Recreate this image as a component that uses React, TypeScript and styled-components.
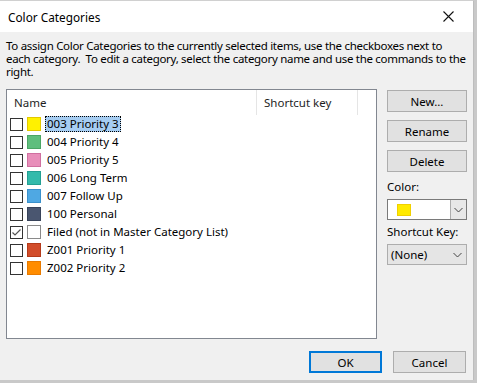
import React from 'react';
import styled, { createGlobalStyle } from "styled-components";

const categories = [
    { name: "003 Priority 3", color: "#fff100", border: "#e3c800", selected: true },
    { name: "004 Priority 4", color: "#5fbe7d", border: "#4aa564" },
    { name: "005 Priority 5", color: "#e88fba", border: "#d070a0" },
    { name: "006 Long Term", color: "#33baab", border: "#23a093" },
    { name: "007 Follow Up", color: "#4fa8e3", border: "#3a91cc" },
    { name: "100 Personal", color: "#4a5670", border: "#38435a" },
    { name: "Filed (not in Master Category List)", color: "#ffffff", border: "#8a8a8a", checked: true },
    { name: "Z001 Priority 1", color: "#d24d2a", border: "#b43a1a" },
    { name: "Z002 Priority 2", color: "#ff8c00", border: "#e87a00" },
];

const descriptionLines = [
    "To assign Color Categories to the currently selected items, use the checkboxes next to",
    "each category.\u00a0 To edit a category, select the category name and use the commands to the",
    "right.",
];

const Chevron = () => (
    <svg width="9" height="6" viewBox="0 0 9 6">
        <polyline points="0.5,1 4.5,5 8.5,1" fill="none" stroke="#444" strokeWidth="1" />
    </svg>
);

const App = () => {
    return (
        <>
            <GlobalStyle />
            <Screen>
                <Dialog>
                    <TitleBar>
                        <Title>Color Categories</Title>
                        <CloseButton>
                            <svg width="11" height="11" viewBox="0 0 11 11">
                                <path d="M0.5 0.5 L10.5 10.5 M10.5 0.5 L0.5 10.5" stroke="#111" strokeWidth="1.1" />
                            </svg>
                        </CloseButton>
                    </TitleBar>
                    <Body>
                        <Description>
                            {descriptionLines.map((line) => (
                                <DescLine key={line}>{line}</DescLine>
                            ))}
                        </Description>
                        <Main>
                            <ListBox>
                                <Header>
                                    <HeaderCell $width={250}>Name</HeaderCell>
                                    <HeaderCell $width={101}>Shortcut key</HeaderCell>
                                </Header>
                                {categories.map((c) => (
                                    <Row key={c.name}>
                                        <CheckBox>
                                            {c.checked && (
                                                <svg width="11" height="11" viewBox="0 0 11 11">
                                                    <polyline points="1.5,5.5 4,8 9.5,2.5" fill="none" stroke="#555" strokeWidth="1.2" />
                                                </svg>
                                            )}
                                        </CheckBox>
                                        <Swatch $color={c.color} $border={c.border} />
                                        <Label $selected={!!c.selected}>{c.name}</Label>
                                    </Row>
                                ))}
                            </ListBox>
                            <Side>
                                <Button>New...</Button>
                                <Button>Rename</Button>
                                <Button>Delete</Button>
                                <FieldLabel>Color:</FieldLabel>
                                <ColorCombo>
                                    <ColorValue>
                                        <ComboSwatch />
                                    </ColorValue>
                                    <DropButton>
                                        <Chevron />
                                    </DropButton>
                                </ColorCombo>
                                <FieldLabel>Shortcut Key:</FieldLabel>
                                <Select>
                                    <span>(None)</span>
                                    <Chevron />
                                </Select>
                            </Side>
                        </Main>
                        <Footer>
                            <Button $default>OK</Button>
                            <Button>Cancel</Button>
                        </Footer>
                    </Body>
                </Dialog>
            </Screen>
        </>
    );
};

const GlobalStyle = createGlobalStyle`
    body {
        margin: 0;
        font-family: "Noto Sans", "Open Sans", sans-serif;
        font-size: 11.5px;
        color: #000;
    }
`;

const Screen = styled.div`
    width: 477px;
    height: 383px;
    background-color: #c9c9c9;
    overflow: hidden;
`;

const Dialog = styled.div`
    width: 473px;
    height: 379px;
    border-top: 1px solid #d0d0d0;
    border-right: 1px solid #bdbdbd;
    display: flex;
    flex-direction: column;
    background-color: #f0f0f0;
`;

const TitleBar = styled.div`
    height: 31px;
    background-color: #ffffff;
    display: flex;
    align-items: center;
    justify-content: space-between;
    padding-left: 8px;
`;

const Title = styled.div`
    font-size: 11.8px;
`;

const CloseButton = styled.div`
    width: 30px;
    height: 31px;
    margin-right: 10px;
    display: flex;
    align-items: center;
    justify-content: center;
`;

const Body = styled.div`
    flex: 1;
    display: flex;
    flex-direction: column;
    padding: 7px 6px 0 6px;
`;

const Description = styled.div`
    line-height: 13px;
`;

const DescLine = styled.div`
    white-space: nowrap;
    letter-spacing: -0.3px;
`;

const Main = styled.div`
    display: flex;
    gap: 10px;
    margin-top: 11px;
`;

const ListBox = styled.div`
    width: 369px;
    height: 248px;
    border: 1px solid #828790;
    background-color: #ffffff;
`;

const Header = styled.div`
    display: flex;
    height: 25px;
`;

const HeaderCell = styled.div<{ $width: number }>`
    width: ${(p) => p.$width}px;
    border-right: 1px solid #e5e5e5;
    padding-left: 7px;
    display: flex;
    align-items: center;
    box-sizing: border-box;
    color: #1e1e1e;
`;

const Row = styled.div`
    height: 18px;
    display: flex;
    align-items: center;
    padding-left: 3px;
`;

const CheckBox = styled.div`
    width: 13px;
    height: 13px;
    box-sizing: border-box;
    border: 1px solid #333333;
    background-color: #ffffff;
    display: flex;
    align-items: center;
    justify-content: center;
`;

const Swatch = styled.div<{ $color: string; $border: string }>`
    width: 14px;
    height: 14px;
    box-sizing: border-box;
    margin-left: 4px;
    background-color: ${(p) => p.$color};
    border: 1px solid ${(p) => p.$border};
`;

const Label = styled.div<{ $selected: boolean }>`
    margin-left: 4px;
    padding: 0 2px;
    height: 16px;
    line-height: 16px;
    box-sizing: border-box;
    background-color: ${(p) => (p.$selected ? "#a6cdf2" : "transparent")};
    outline: ${(p) => (p.$selected ? "1px dotted #000" : "none")};
    outline-offset: -1px;
`;

const Side = styled.div`
    width: 80px;
    display: flex;
    flex-direction: column;
    padding-top: 1px;
`;

const Button = styled.div<{ $default?: boolean }>`
    width: ${(p) => (p.$default ? 73 : 80)}px;
    height: 22px;
    box-sizing: border-box;
    background-color: #e1e1e1;
    border: ${(p) => (p.$default ? "2px solid #0078d7" : "1px solid #adadad")};
    display: flex;
    align-items: center;
    justify-content: center;
    margin-bottom: 8px;
`;

const FieldLabel = styled.div`
    height: 14px;
    line-height: 14px;
    margin: 0 0 5px 0;
`;

const ColorCombo = styled.div`
    height: 21px;
    box-sizing: border-box;
    border: 1px solid #7a7a7a;
    background-color: #ffffff;
    display: flex;
    margin-bottom: 5px;
`;

const ColorValue = styled.div`
    flex: 1;
    display: flex;
    align-items: center;
    padding-left: 9px;
`;

const ComboSwatch = styled.div`
    width: 14px;
    height: 12px;
    background-color: #ffea00;
    border: 1px solid #f0d000;
    box-sizing: border-box;
`;

const DropButton = styled.div`
    width: 15px;
    border-left: 1px solid #adadad;
    background-color: #e8e8e8;
    display: flex;
    align-items: center;
    justify-content: center;
`;

const Select = styled.div`
    height: 21px;
    box-sizing: border-box;
    border: 1px solid #adadad;
    background-color: #e5e5e5;
    display: flex;
    align-items: center;
    justify-content: space-between;
    padding: 0 4px 0 3px;
`;

const Footer = styled.div`
    display: flex;
    justify-content: flex-end;
    gap: 11px;
    margin-top: 12px;
    padding-right: 1px;

    & > div {
        width: 73px;
    }
`;

export default App;
